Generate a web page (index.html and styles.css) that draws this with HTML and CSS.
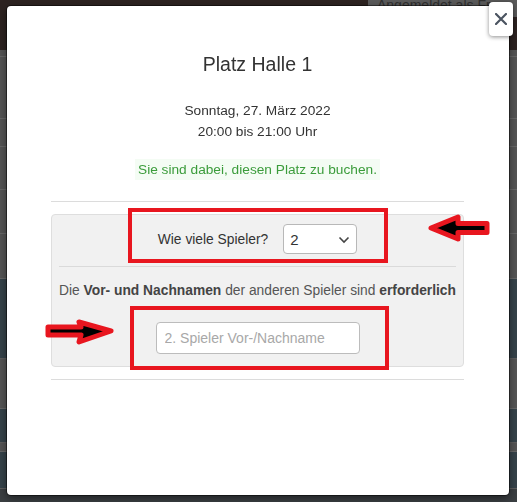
FILE: index.html
```html
<!DOCTYPE html>
<html lang="de">
<head>
<meta charset="utf-8">
<title>Platz Halle 1</title>
<link rel="stylesheet" href="styles.css">
</head>
<body>
<div class="page">
  <div class="topbar">
    <div class="login">Angemeldet als Fr</div>
  </div>
  <div class="rows">
    <div class="row gray h7"></div>
    <div class="row gray h62"></div>
    <div class="row gray h28"></div>
    <div class="row gray h43"></div>
    <div class="row gray h44"></div>
    <div class="row gray h45"></div>
    <div class="row slate h80"></div>
    <div class="row gray h50"></div>
    <div class="row slate h34"></div>
    <div class="row gray h9"></div>
    <div class="row slate h37"></div>
    <div class="row foot"></div>
  </div>
</div>

<div class="modal">
  <div class="modal-body">
    <h4 class="title">Platz Halle 1</h4>
    <p class="when">Sonntag, 27. März 2022<br>20:00 bis 21:00 Uhr</p>
    <p class="notice"><span class="notice-text">Sie sind dabei, diesen Platz zu buchen.</span></p>
    <hr class="sep">
    <div class="well">
      <div class="count-row">
        <label class="count-label" for="cnt">Wie viele Spieler?</label>
        <div class="select-wrap">
          <select id="cnt" class="select"><option>2</option></select>
          <svg class="chev" width="12" height="8" viewBox="0 0 12 8"><path d="M1.5 1.5 L6 6 L10.5 1.5" fill="none" stroke="#444" stroke-width="1.6"/></svg>
        </div>
      </div>
      <hr class="inner-sep">
      <p class="hint">Die <b>Vor- und Nachnamen</b> der anderen Spieler sind <b>erforderlich</b></p>
      <div class="name-row">
        <input class="name-input" type="text" placeholder="2. Spieler Vor-/Nachname">
      </div>

      <div class="mark mark-count"></div>
      <div class="mark mark-name"></div>
      <svg class="arrow arrow-left" width="64" height="28" viewBox="0 0 64 28">
        <polygon points="4,14 31,3 31,9.5 60,9.5 60,18.5 31,18.5 31,25" fill="#000" stroke="#e8161f" stroke-width="5" stroke-linejoin="round"/>
      </svg>
      <svg class="arrow arrow-right" width="70" height="27" viewBox="0 0 70 27">
        <polygon points="3,8 36,8 34,3 66,12 34,23 36,16 3,16" fill="#000" stroke="#e8161f" stroke-width="5" stroke-linejoin="round"/>
      </svg>
    </div>
    <hr class="sep">
  </div>
  <button class="close" type="button" aria-label="Schließen">
    <svg width="12" height="12" viewBox="0 0 12 12"><path d="M1 1 L11 11 M11 1 L1 11" stroke="#4b5461" stroke-width="2.2" stroke-linecap="round"/></svg>
  </button>
</div>
</body>
</html>
```
FILE: styles.css
```css
* { box-sizing: border-box; }
html, body { margin: 0; padding: 0; }
body {
  width: 517px;
  height: 502px;
  overflow: hidden;
  background: #3a4349;
  font-family: "Liberation Sans", Arial, sans-serif;
  color: #333;
}
.page { display: flex; flex-direction: column; }
.topbar {
  height: 50px;
  background: #2d2321;
  display: flex;
  justify-content: flex-end;
}
.login {
  width: 149px;
  height: 22px;
  background: #5a5a5a;
  color: #2f2f2f;
  font-size: 14px;
  line-height: 20px;
  padding-left: 9px;
  margin-top: -5px;
  white-space: nowrap;
}
.rows { display: flex; flex-direction: column; }
.row { border-bottom: 1px solid #686868; }
.gray { background: #555; }
.slate { background: #36434a; border-bottom-color: #5e5e5e; }
.h7 { height: 7px; }
.h62 { height: 62px; }
.h28 { height: 28px; }
.h43 { height: 43px; }
.h44 { height: 44px; }
.h45 { height: 45px; }
.h80 { height: 80px; }
.h50 { height: 50px; }
.h34 { height: 34px; }
.h9 { height: 9px; }
.h37 { height: 37px; }
.foot { height: 20px; background: #3b3f42; }

.modal {
  position: fixed;
  left: 7px;
  top: 6px;
  width: 502px;
  height: 489px;
  background: #fff;
  border-radius: 4px;
  box-shadow: 0 0 0 1px rgba(0,0,0,0.45), 0 3px 9px rgba(0,0,0,0.5);
}
.modal-body {
  padding: 48px 45px 0 44px;
  text-align: center;
}
.title {
  margin: 0;
  font-size: 19.5px;
  font-weight: normal;
  line-height: 21px;
  color: #333;
}
.when {
  margin: 25px 0 0;
  font-size: 13.7px;
  line-height: 21px;
  color: #333;
}
.notice {
  margin: 17px 0 0;
  font-size: 13.7px;
  line-height: 21px;
}
.notice-text {
  display: inline-block;
  padding: 0 3px;
  background: #f4fcf4;
  color: #3b9c3b;
}
.sep {
  margin: 21px 0 0;
  border: 0;
  border-top: 1px solid #dcdcdc;
  height: 0;
}
.sep:last-child { margin-top: 12px; }
.well {
  position: relative;
  margin-top: 12px;
  background: #f1f1f1;
  border: 1px solid #dedede;
  border-radius: 4px;
  padding: 9px 7px 12px;
}
.count-row {
  display: flex;
  justify-content: center;
  align-items: center;
  gap: 15px;
}
.count-label {
  font-size: 13.8px;
  color: #333;
}
.select-wrap { position: relative; }
.select {
  appearance: none;
  -webkit-appearance: none;
  width: 74px;
  height: 30px;
  border: 1px solid #b8b8b8;
  border-radius: 4px;
  background: #fff;
  padding: 0 0 0 6px;
  font-family: "Liberation Sans", Arial, sans-serif;
  font-size: 15px;
  color: #333;
  display: block;
}
.chev {
  position: absolute;
  right: 7px;
  top: 12px;
  pointer-events: none;
}
.inner-sep {
  margin: 12px 0 0;
  border: 0;
  border-top: 1px solid #dadada;
  height: 0;
}
.hint {
  margin: 13px 0 0;
  font-size: 13.8px;
  line-height: 21px;
  color: #555;
}
.hint b { color: #444; }
.name-row {
  display: flex;
  justify-content: center;
  margin-top: 21px;
}
.name-input {
  width: 204px;
  height: 32px;
  border: 1px solid #bcbcbc;
  border-radius: 4px;
  padding: 0 8px;
  font-family: "Liberation Sans", Arial, sans-serif;
  font-size: 14px;
  color: #333;
  background: #fff;
}
.name-input::placeholder { color: #a8a8a8; }

.mark {
  position: absolute;
  border: 4px solid #e8161f;
  pointer-events: none;
}
.mark-count { left: 76px; top: -7px; width: 260px; height: 55px; }
.mark-name { left: 78px; top: 91px; width: 259px; height: 64px; }
.arrow { position: absolute; }
.arrow-left { left: 375px; top: -1px; }
.arrow-right { left: -7px; top: 104px; }

.close {
  position: fixed;
  left: 489px;
  top: 2px;
  width: 24px;
  height: 34px;
  padding: 0;
  border: 0;
  border-radius: 4px;
  background: #fff;
  box-shadow: 0 1px 4px rgba(0,0,0,0.45);
  display: flex;
  align-items: center;
  justify-content: center;
}
```
